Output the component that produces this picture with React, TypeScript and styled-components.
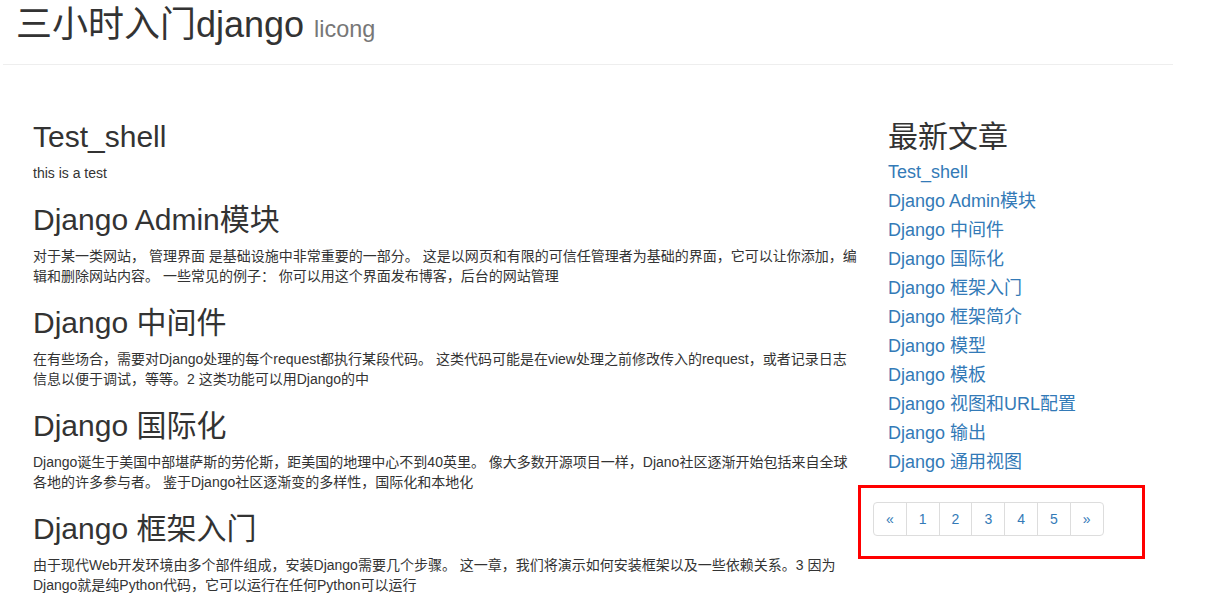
import React from "react";
import styled, { createGlobalStyle } from "styled-components";

const GlobalStyle = createGlobalStyle`
  html, body { margin: 0; padding: 0; background: #fff; }
  body {
    font-family: "Liberation Sans", "Noto Sans CJK SC", sans-serif;
    font-size: 14px;
    line-height: 20px;
    color: #333;
  }
  * { box-sizing: border-box; }
`;

const Page = styled.div`
  width: 1173px;
  padding-left: 3px;
`;

const Header = styled.header`
  padding: 5px 15px 0 13px;
  height: 65px;
  border-bottom: 1px solid #eee;
`;

const SiteTitle = styled.h1`
  margin: 0;
  font-size: 36px;
  line-height: 39.6px;
  font-weight: 400;
  color: #333;
`;

const Sub = styled.small`
  font-size: 65%;
  color: #777;
  font-weight: 400;
`;

const Main = styled.main`
  display: flex;
  gap: 30px;
  padding: 35px 0 0 30px;
`;

const Articles = styled.section`
  width: 825px;
  flex: none;
`;

const Sidebar = styled.aside`
  width: 270px;
  flex: none;
`;

const Heading = styled.h2<{ $tight?: boolean }>`
  margin: 20px 0 ${(p) => (p.$tight ? "5px" : "10px")};
  font-size: 30px;
  line-height: 33px;
  font-weight: 400;
  color: #333;
`;

const Summary = styled.p`
  margin: 0 0 10px;
  font-size: 14px;
  line-height: 20px;
`;

const LinkList = styled.ul`
  list-style: none;
  margin: 0;
  padding: 0;
`;

const LinkItem = styled.li`
  font-size: 18px;
  line-height: 29px;
  height: 29px;
`;

const Link = styled.a`
  color: #337ab7;
  text-decoration: none;
`;

const Highlight = styled.div`
  margin: 8px 0 0 -30px;
  width: 287px;
  height: 74px;
  border: 3px solid #ff0000;
  padding: 14px 12px;
`;

const Pager = styled.ul`
  display: flex;
  list-style: none;
  margin: 0;
  padding: 0;
`;

const PageLink = styled.a<{ $pos?: "first" | "last" }>`
  display: block;
  padding: 6px 12px;
  margin-left: ${(p) => (p.$pos === "first" ? "0" : "-1px")};
  line-height: 20px;
  font-size: 14px;
  color: #337ab7;
  text-decoration: none;
  border: 1px solid #ddd;
  background: #fff;
  border-radius: ${(p) =>
    p.$pos === "first" ? "4px 0 0 4px" : p.$pos === "last" ? "0 4px 4px 0" : "0"};
`;

const posts = [
  { title: "Test_shell", body: "this is a test" },
  {
    title: "Django Admin模块",
    body: "对于某一类网站， 管理界面 是基础设施中非常重要的一部分。 这是以网页和有限的可信任管理者为基础的界面，它可以让你添加，编辑和删除网站内容。 一些常见的例子： 你可以用这个界面发布博客，后台的网站管理",
  },
  {
    title: "Django 中间件",
    body: "在有些场合，需要对Django处理的每个request都执行某段代码。 这类代码可能是在view处理之前修改传入的request，或者记录日志信息以便于调试，等等。2 这类功能可以用Django的中",
  },
  {
    title: "Django 国际化",
    body: "Django诞生于美国中部堪萨斯的劳伦斯，距美国的地理中心不到40英里。 像大多数开源项目一样，Djano社区逐渐开始包括来自全球各地的许多参与者。 鉴于Django社区逐渐变的多样性，国际化和本地化",
  },
  {
    title: "Django 框架入门",
    body: "由于现代Web开发环境由多个部件组成，安装Django需要几个步骤。 这一章，我们将演示如何安装框架以及一些依赖关系。3 因为Django就是纯Python代码，它可以运行在任何Python可以运行",
  },
];

const recent = [
  "Test_shell",
  "Django Admin模块",
  "Django 中间件",
  "Django 国际化",
  "Django 框架入门",
  "Django 框架简介",
  "Django 模型",
  "Django 模板",
  "Django 视图和URL配置",
  "Django 输出",
  "Django 通用视图",
];

const pages = ["«", "1", "2", "3", "4", "5", "»"];

export default function App() {
  return (
    <Page>
      <GlobalStyle />
      <Header>
        <SiteTitle>
          三小时入门django <Sub>licong</Sub>
        </SiteTitle>
      </Header>
      <Main>
        <Articles>
          {posts.map((p) => (
            <article key={p.title}>
              <Heading>{p.title}</Heading>
              <Summary>{p.body}</Summary>
            </article>
          ))}
        </Articles>
        <Sidebar>
          <Heading $tight>最新文章</Heading>
          <LinkList>
            {recent.map((r) => (
              <LinkItem key={r}>
                <Link href="#">{r}</Link>
              </LinkItem>
            ))}
          </LinkList>
          <Highlight>
            <Pager>
              {pages.map((n, i) => (
                <li key={n}>
                  <PageLink
                    href="#"
                    $pos={i === 0 ? "first" : i === pages.length - 1 ? "last" : undefined}
                  >
                    {n}
                  </PageLink>
                </li>
              ))}
            </Pager>
          </Highlight>
        </Sidebar>
      </Main>
    </Page>
  );
}
